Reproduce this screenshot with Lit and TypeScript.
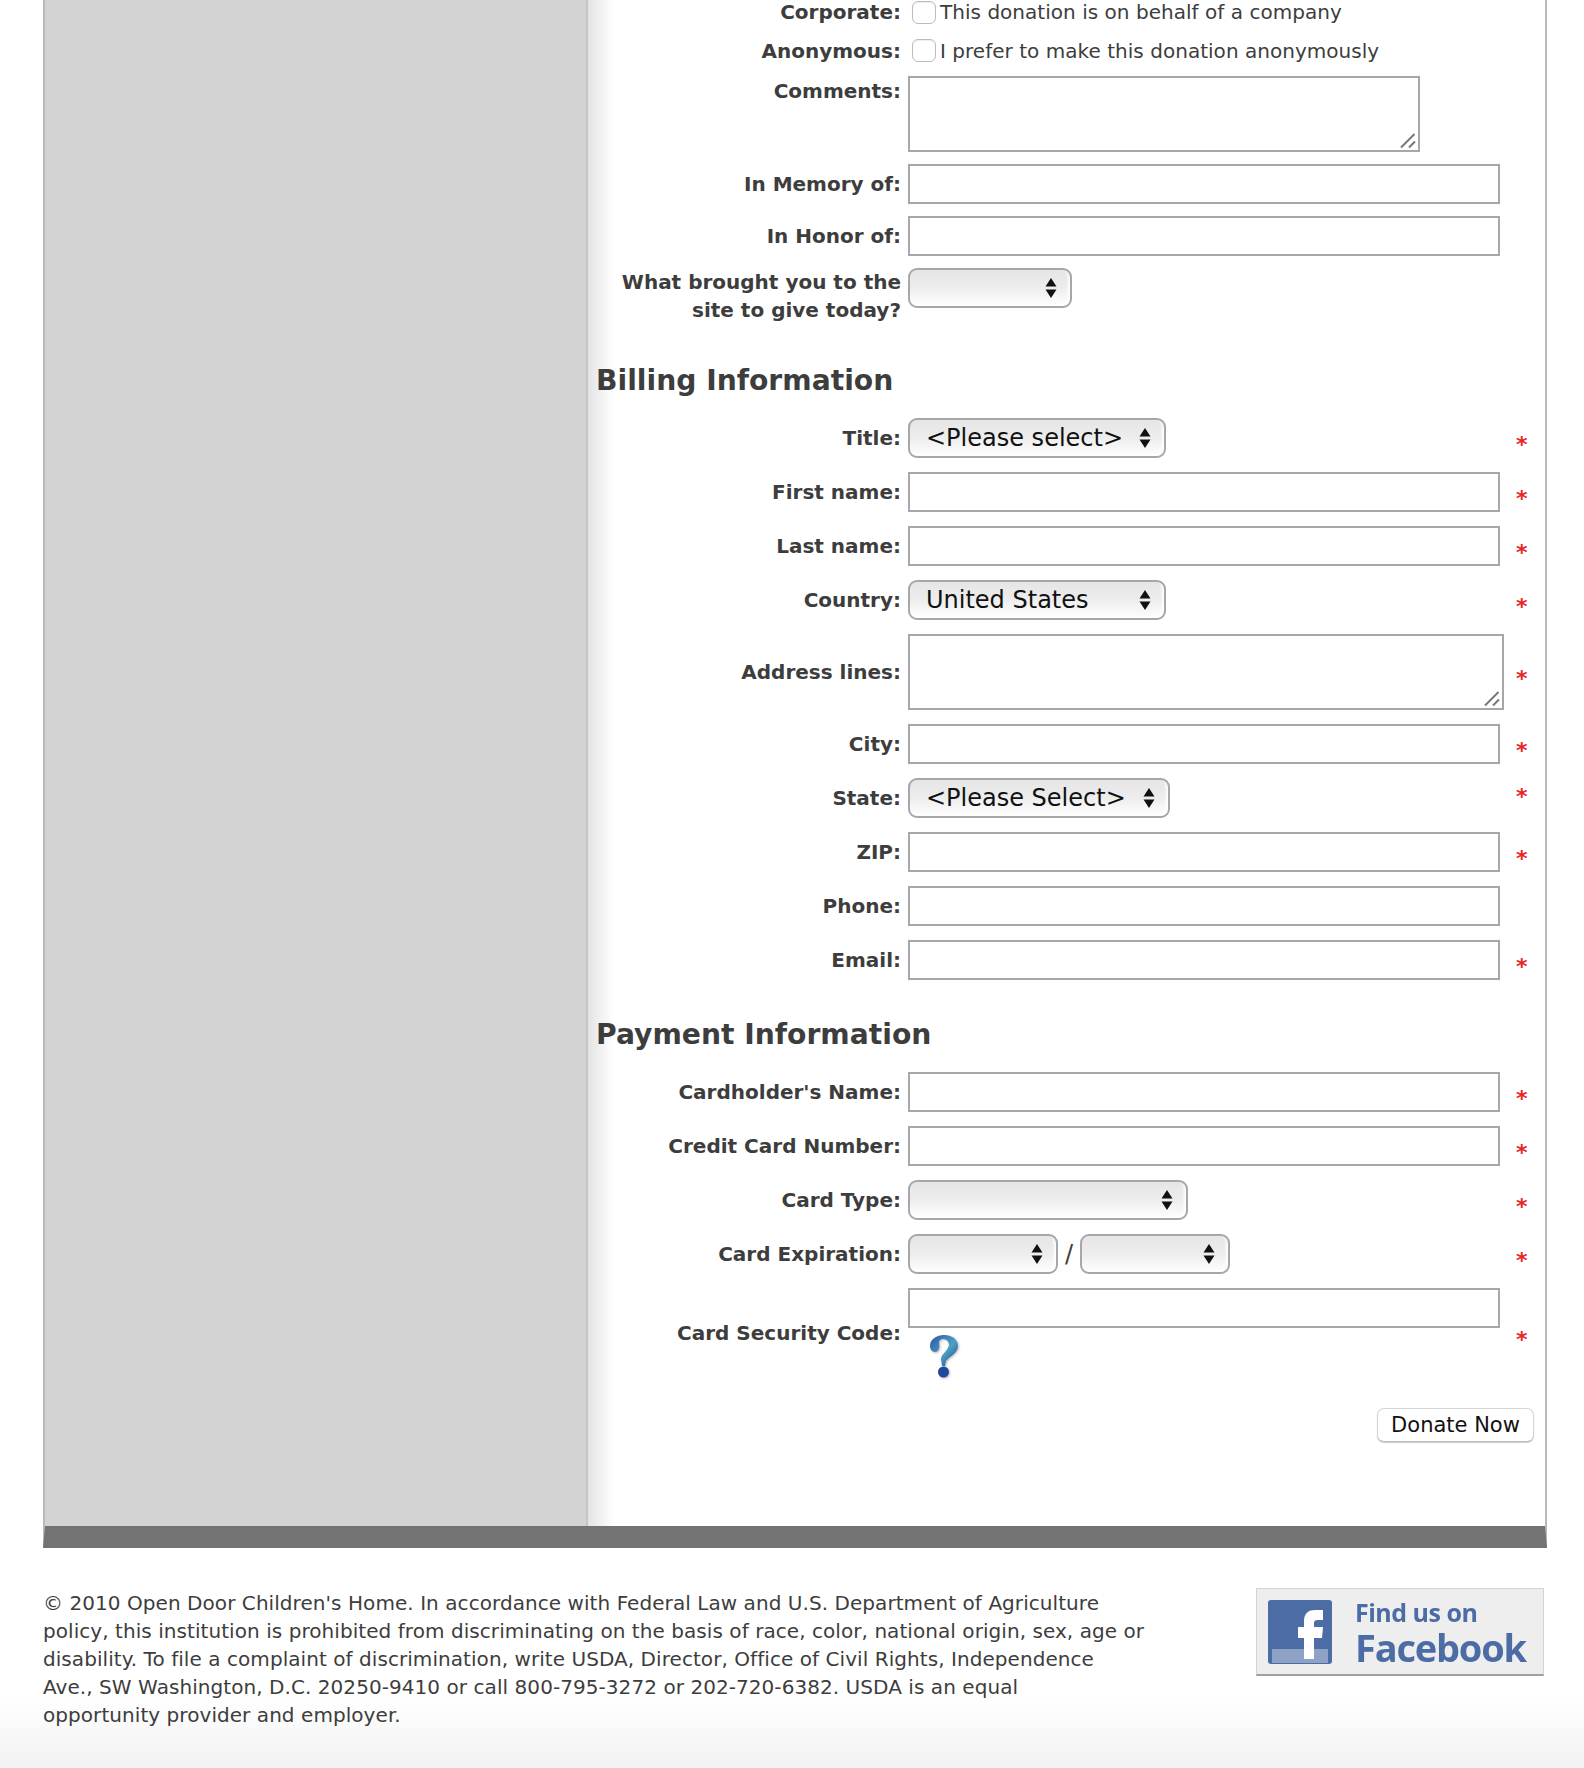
import { LitElement, html, css } from "lit";
import { customElement } from "lit/decorators.js";

const arrows = html`<svg class="arrows" width="12" height="22" viewBox="0 0 12 22"><path d="M6 1 L11.5 9.5 H.5 Z M6 21 L11.5 12.5 H.5 Z" fill="#111"/></svg>`;
const grip = html`<svg class="grip" width="18" height="18" viewBox="0 0 18 18"><path d="M1 15.5 L14.5 2 M9 15.5 L15 9.5" stroke="#777" stroke-width="2" fill="none"/></svg>`;

function sel(cls: string, text = "") {
  return html`<span class="selwrap ${cls}"><select aria-label="choice"><option>${text}</option></select>${arrows}</span>`;
}

@customElement("app-root")
export class AppRoot extends LitElement {
  static styles = css`
    :host { display: block; font-family: "DejaVu Sans", Verdana, sans-serif; color: #3d3d3d; font-size: 20px; line-height: 28px;
      background: linear-gradient(#fff 1695px, #f2f2f2 1768px); height: 1768px; overflow: hidden; }
    .wrap { margin-left: 43px; width: 1500px; border-style: solid; border-width: 0 2px 22px; border-color: #b9b9b9 #b9b9b9 #737373; display: flex; height: 1526px; overflow: hidden; box-sizing: content-box; }
    .side { width: 541px; flex: none; background: #d3d3d3; border-right: 2px solid #c4c4c4; }
    .main { flex: 1; padding-left: 8px; background: linear-gradient(90deg, #e4e4e4, #fff 26px); }
    .row { display: grid; grid-template-columns: 305px 592px 1fr; column-gap: 7px; margin-bottom: 14px; align-items: center; }
    .tight .row { margin-bottom: 12px; }
    .row.top { align-items: start; }
    label { font-weight: 700; text-align: right; display: block; font-size: 20px; line-height: 28px; }
    .row.first { height: 24px; }
    .row.first label, .row.first .txt { line-height: 22px; }
    .row.chk { height: 28px; }
    .row.chk label, .row.chk .txt, .row.top.c label { padding-top: 1px; }
    .field { display: flex; align-items: center; min-width: 0; }
    .txt { margin-left: 4px; font-size: 20px; white-space: nowrap; letter-spacing: .03px; }
    .cb { appearance: none; margin: 0 0 0 4px; width: 24px; height: 23px; box-sizing: border-box; border: 1px solid #bcbcbc; border-radius: 6px; background: #fff; box-shadow: inset 0 1px 1px #eee; flex: none; }
    input.t { display: block; box-sizing: border-box; width: 592px; height: 40px; border: 2px solid #a6a6ab; background: #fff; margin: 0; padding: 0 4px; }
    .tawrap { position: relative; display: block; flex: none; height: 76px; }
    textarea { display: block; box-sizing: border-box; width: 100%; height: 76px; border: 2px solid #a6a6ab; background: #fff; margin: 0; padding: 4px; resize: none; }
    .grip { position: absolute; right: 2px; bottom: 2px; pointer-events: none; }
    .ta1 { width: 512px; }
    .ta2 { width: 596px; }
    .star { color: #e8282a; font-size: 22px; font-weight: 700; margin-left: 9px; position: relative; top: 7px; line-height: 28px; font-family: "DejaVu Sans", sans-serif; }
    .star.up { top: -1px; }
    h2 { font-size: 28.2px; line-height: 36px; margin: 39px 0 19px; font-weight: 700; color: #3d3d3d; }
    h2.pay { margin: 37px 0 19px; }
    .selwrap { position: relative; display: inline-block; height: 40px; flex: none; }
    select { appearance: none; display: block; width: 100%; height: 40px; box-sizing: border-box; border: 2px solid #a6a6ab; border-radius: 9px; margin: 0;
      background: linear-gradient(#e6e6e6, #ececec 45%, #fbfbfb 90%); box-shadow: inset -2px -2px 3px #fff; padding: 0 40px 0 16px; color: #111; font: 24px "DejaVu Sans", sans-serif; }
    .arrows { position: absolute; right: 15px; top: 9px; pointer-events: none; }
    .w164 { width: 164px; } .w258 { width: 258px; } .w262 { width: 262px; } .w280 { width: 280px; } .w150 { width: 150px; }
    .slash { width: 22px; text-align: center; font-size: 24px; flex: none; }
    .sec { display: block; }
    .help { display: block; margin: 7px 0 0 21px; filter: blur(.4px) drop-shadow(1px 1px 1px #bbb); }
    .act { display: flex; justify-content: flex-end; padding: 16px 11px 0 0; }
    button { width: 157px; height: 34px; box-sizing: border-box; background: #fff; border: 1px solid #d5d5d5; border-bottom-color: #bdbdbd; border-radius: 7px; box-shadow: 0 1px 1px #ccc; font: 21px "DejaVu Sans", sans-serif; color: #111; padding: 0; }
    footer { display: flex; justify-content: space-between; align-items: flex-start; margin: 41px 0 0 43px; width: 1500px; }
    p { margin: 0; font-size: 20px; line-height: 28px; white-space: nowrap; color: #3d3d3d; letter-spacing: .06px; }
    .fb { flex: none; width: 288px; height: 88px; box-sizing: border-box; display: flex; gap: 23px; background: #eeeeee; border: 1px solid #d4d4d4; border-bottom: 2px solid #a0a0a0; padding: 11px 0 0 11px; margin: -1px -1px 0 0; color: #4c6ca6; filter: blur(.4px); }
    .fbt { display: flex; flex-direction: column; margin-top: -3px; }
    .f1 { font: 700 25px/30px "Open Sans", sans-serif; letter-spacing: -.5px; }
    .f2 { font: 700 38px/40px "Open Sans", sans-serif; letter-spacing: -1.2px; }
  `;

  private inp(name: string, star = true) {
    return html`<div class="row"><label>${name}</label><div class="field"><input class="t" type="text" aria-label=${name} /></div>${star ? html`<span class="star">*</span>` : html`<span></span>`}</div>`;
  }

  private selRow(name: string, cls: string, text = "", up = false) {
    return html`<div class="row"><label>${name}</label><div class="field">${sel(cls, text)}</div><span class="star ${up ? "up" : ""}">*</span></div>`;
  }

  render() {
    return html`
      <div class="wrap">
        <div class="side"></div>
        <div class="main">
          <form>
            <div class="tight">
              <div class="row first"><label>Corporate:</label><div class="field"><input class="cb" type="checkbox" aria-label="Corporate" /><span class="txt">This donation is on behalf of a company</span></div><span></span></div>
              <div class="row chk"><label>Anonymous:</label><div class="field"><input class="cb" type="checkbox" aria-label="Anonymous" /><span class="txt">I prefer to make this donation anonymously</span></div><span></span></div>
              <div class="row top c"><label>Comments:</label><div class="field"><span class="tawrap ta1"><textarea aria-label="Comments"></textarea>${grip}</span></div><span></span></div>
              <div class="row"><label>In Memory of:</label><div class="field"><input class="t" type="text" aria-label="In Memory of" /></div><span></span></div>
              <div class="row"><label>In Honor of:</label><div class="field"><input class="t" type="text" aria-label="In Honor of" /></div><span></span></div>
              <div class="row top"><label>What brought you to the<br />site to give today?</label><div class="field">${sel("w164")}</div><span></span></div>
            </div>
            <h2>Billing Information</h2>
            ${this.selRow("Title:", "w258", "<Please select>")}
            ${this.inp("First name:")}
            ${this.inp("Last name:")}
            ${this.selRow("Country:", "w258", "United States")}
            <div class="row"><label>Address lines:</label><div class="field"><span class="tawrap ta2"><textarea aria-label="Address lines"></textarea>${grip}</span></div><span class="star">*</span></div>
            ${this.inp("City:")}
            ${this.selRow("State:", "w262", "<Please Select>", true)}
            ${this.inp("ZIP:")}
            ${this.inp("Phone:", false)}
            ${this.inp("Email:")}
            <h2 class="pay">Payment Information</h2>
            ${this.inp("Cardholder's Name:")}
            ${this.inp("Credit Card Number:")}
            ${this.selRow("Card Type:", "w280")}
            <div class="row"><label>Card Expiration:</label><div class="field">${sel("w150")}<span class="slash">/</span>${sel("w150")}</div><span class="star">*</span></div>
            <div class="row"><label>Card Security Code:</label><div class="sec"><input class="t" type="text" aria-label="Card Security Code" />
              <svg class="help" width="30" height="43" viewBox="0 0 30 43">
                <defs><linearGradient id="q" x1="0" y1="0" x2="1" y2="1"><stop offset="0" stop-color="#2a55a5"/><stop offset=".55" stop-color="#4fa0c4"/><stop offset="1" stop-color="#1b3f8c"/></linearGradient></defs>
                <path d="M1 11 C1 4 8 0 15 0 C24 0 29 5 29 11 C29 18 21 21 17 26 L16 31 H13 L12 24 C12 19 19 16 20 10 C20 6 17 4 14 4 C11 4 10 6 10 8 C11 12 10 17 6 17 C3 17 1 14 1 11 Z" fill="url(#q)"/>
                <circle cx="14.5" cy="37" r="5.5" fill="#1f4a9c"/>
              </svg></div><span class="star">*</span></div>
            <div class="act"><button type="button">Donate Now</button></div>
          </form>
        </div>
      </div>
      <footer>
        <p>© 2010 Open Door Children's Home. In accordance with Federal Law and U.S. Department of Agriculture<br />policy, this institution is prohibited from discriminating on the basis of race, color, national origin, sex, age or<br />disability. To file a complaint of discrimination, write USDA, Director, Office of Civil Rights, Independence<br />Ave., SW Washington, D.C. 20250-9410 or call 800-795-3272 or 202-720-6382. USDA is an equal<br />opportunity provider and employer.</p>
        <div class="fb">
          <svg width="64" height="64" viewBox="0 0 64 64"><rect width="64" height="64" rx="3" fill="#4c6ca6"/><rect x="4" y="49" width="56" height="14" fill="#8ea2c6"/><path d="M36 59 V38 H30 V27 H36 V21 C36 13 41 10 47 10 H55 V20 H50 C47 20 46 21 46 23 V27 H55 L54 38 H46 V59 Z" fill="#fff"/></svg>
          <div class="fbt"><span class="f1">Find us on</span><span class="f2">Facebook</span></div>
        </div>
      </footer>
    `;
  }
}
